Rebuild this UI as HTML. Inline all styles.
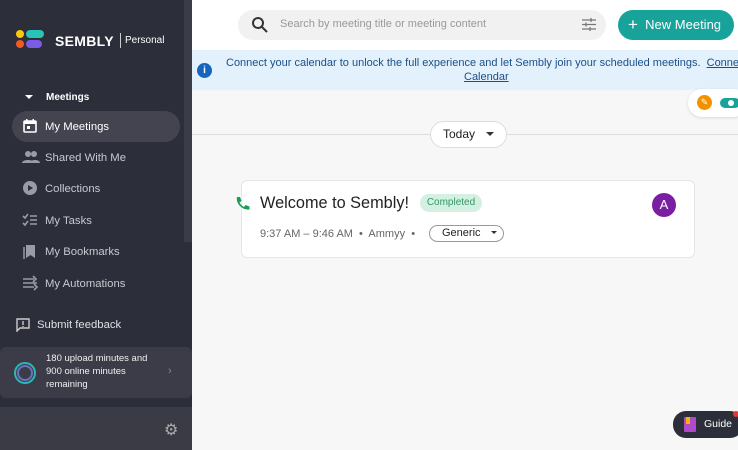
<!DOCTYPE html>
<html><head><style>
*{box-sizing:border-box;margin:0;padding:0}
body{width:738px;height:450px;overflow:hidden;font-family:"Liberation Sans",Arial,sans-serif;background:#f7f7f7;position:relative}
.sb{position:absolute;left:0;top:0;width:192px;height:450px;background:#2c2e39;color:#e8e8ec}
.scroll{position:absolute;left:184px;top:0;width:8px;height:242px;background:#3a3c47}
.item{position:absolute;left:12px;width:168px;height:31px;border-radius:16px;font-size:11.3px;display:flex;align-items:center;padding-left:33px;color:#c8c9d0}
.item svg{position:absolute;left:10px;top:7px}
.abs{position:absolute}
</style></head><body>
<div class="sb">
 <div class="scroll"></div>
 <svg class="abs" style="left:15px;top:30px" width="34" height="20">
  <circle cx="5" cy="4" r="4" fill="#f9c80e"/><circle cx="5" cy="14" r="4" fill="#f15a24"/>
  <rect x="11" y="0" width="18" height="8" rx="4" fill="#29c4b7"/><rect x="11" y="10" width="16" height="8" rx="4" fill="#7b5ce6"/>
 </svg>
 <div class="abs" style="left:55px;top:33px;font-size:14px;font-weight:bold;color:#fff;letter-spacing:.3px">SEMBLY</div>
 <div class="abs" style="left:120px;top:33px;width:1px;height:15px;background:#ccc"></div>
 <div class="abs" style="left:125px;top:35px;font-size:10px;color:#fff">Personal</div>
 <div class="abs" style="left:25px;top:95px;width:0;height:0;border-left:4px solid transparent;border-right:4px solid transparent;border-top:4px solid #fff"></div>
 <div class="abs" style="left:46px;top:92px;font-size:10px;font-weight:bold;color:#fff">Meetings</div>
 <div class="item" style="top:111px;background:#43444f;color:#fff"><svg width="16" height="16" viewBox="0 0 16 16"><rect x="2" y="3" width="12" height="11" rx="1" fill="none" stroke="#fff" stroke-width="1.6"/><rect x="2" y="3" width="12" height="3" fill="#fff"/><rect x="4" y="1" width="1.5" height="3" fill="#fff"/><rect x="10.5" y="1" width="1.5" height="3" fill="#fff"/><rect x="5" y="8" width="3" height="3" fill="#fff"/></svg>My Meetings</div>
 <div class="item" style="top:142px"><svg width="18" height="16" viewBox="0 0 18 16"><circle cx="6" cy="5" r="3" fill="#9a9ba5"/><circle cx="12" cy="5" r="3" fill="#9a9ba5"/><path d="M0 14c0-4 12-4 12 0zM8 14c0-4 10-4 10 0z" fill="#9a9ba5"/></svg>Shared With Me</div>
 <div class="item" style="top:173px"><svg width="16" height="16"><circle cx="8" cy="8" r="7" fill="#9a9ba5"/><path d="M6 5l5 3-5 3z" fill="#2c2e39"/></svg>Collections</div>
 <div class="item" style="top:205px"><svg width="16" height="16" fill="none" stroke="#9a9ba5" stroke-width="1.6"><path d="M1 4l2 2 3-4M1 11l2 2 3-4M8 4h7M8 8h7M8 12h7"/></svg>My Tasks</div>
 <div class="item" style="top:236px"><svg width="16" height="16"><path d="M4 2h9v13l-4.5-3L4 15z" fill="#9a9ba5"/><path d="M2 4v12" stroke="#9a9ba5" stroke-width="1.5"/></svg>My Bookmarks</div>
 <div class="item" style="top:268px"><svg width="16" height="16" fill="none" stroke="#9a9ba5" stroke-width="1.6"><path d="M1 4h11M1 8h14M1 12h11M11 1l3 3-3 3M12 9l3 3-3 3"/></svg>My Automations</div>
 <svg class="abs" style="left:16px;top:318px" width="14" height="14" fill="none" stroke="#ccc" stroke-width="1.4"><path d="M1 1h12v9H4l-3 3z"/><path d="M7 3v4M7 8v1"/></svg>
 <div class="abs" style="left:37px;top:319px;font-size:11.3px;color:#e0e0e4">Submit feedback</div>
 <div class="abs" style="left:0;top:347px;width:192px;height:51px;background:#3b3c47;border-radius:6px"></div>
 <svg class="abs" style="left:13px;top:361px" width="24" height="24"><circle cx="12" cy="12" r="10" fill="none" stroke="#2ab8b0" stroke-width="2"/><circle cx="12" cy="12" r="7" fill="none" stroke="#6c6fc9" stroke-width="2"/></svg>
 <div class="abs" style="left:46px;top:352px;font-size:9.5px;line-height:13px;color:#f0f0f2">180 upload minutes and<br>900 online minutes<br>remaining</div>
 <div class="abs" style="left:168px;top:365px;font-size:11px;color:#888">›</div>
 <div class="abs" style="left:0;top:407px;width:192px;height:43px;background:#3a3b45"></div>
 <div class="abs" style="left:164px;top:420px;font-size:16px;color:#aaa">⚙</div>
</div>
<div class="abs" style="left:192px;top:0;width:546px;height:50px;background:#fff"></div>
<div class="abs" style="left:238px;top:10px;width:368px;height:30px;background:#f1f1f1;border-radius:15px"></div>
<svg class="abs" style="left:252px;top:17px" width="16" height="16" fill="none" stroke="#333" stroke-width="2"><circle cx="6" cy="6" r="5"/><path d="M10 10l5 5"/></svg>
<div class="abs" style="left:280px;top:18px;font-size:11px;color:#999">Search by meeting title or meeting content</div>
<svg class="abs" style="left:582px;top:18px" width="14" height="13" stroke="#777" stroke-width="1.3"><path d="M0 2h14M0 6.5h14M0 11h14"/><path d="M9 0v4M4 4.5v4M8 9v4"/></svg>
<div class="abs" style="left:618px;top:10px;width:116px;height:30px;background:#17a39a;border-radius:15px;color:#fff;font-size:13px;line-height:30px;padding-left:10px"><span style="font-size:17px;vertical-align:-1px">+</span>&nbsp; New Meeting</div>
<div class="abs" style="left:192px;top:50px;width:546px;height:40px;background:#e2f1fb"></div>
<div class="abs" style="left:197px;top:63px;width:15px;height:15px;border-radius:50%;background:#1565c0;color:#fff;font-size:10px;font-weight:bold;text-align:center;line-height:15px">i</div>
<div class="abs" style="left:226px;top:55px;width:540px;font-size:11px;line-height:16px;color:#1c4f8a;white-space:nowrap">Connect your calendar to unlock the full experience and let Sembly join your scheduled meetings. &nbsp;<u>Connect</u></div>
<div class="abs" style="left:464px;top:71px;font-size:11px;color:#1c4f8a"><u>Calendar</u></div>
<div class="abs" style="left:688px;top:89px;width:60px;height:28px;background:#fff;border-radius:14px;box-shadow:0 1px 3px rgba(0,0,0,.12)"></div>
<div class="abs" style="left:697px;top:95px;width:15px;height:15px;border-radius:50%;background:#f39200;color:#fff;font-size:9px;text-align:center;line-height:15px">✎</div>
<div class="abs" style="left:720px;top:98px;width:20px;height:10px;border-radius:5px;background:#17a39a"></div>
<div class="abs" style="left:728px;top:100px;width:6px;height:6px;border-radius:50%;background:#fff"></div>
<div class="abs" style="left:192px;top:134px;width:546px;height:1px;background:#ddd"></div>
<div class="abs" style="left:430px;top:121px;width:77px;height:27px;background:#fff;border:1px solid #ddd;border-radius:14px;font-size:12px;line-height:25px;padding-left:12px;color:#222">Today <span style="display:inline-block;margin-left:8px;border-left:4px solid transparent;border-right:4px solid transparent;border-top:4px solid #333;vertical-align:2px"></span></div>
<div class="abs" style="left:241px;top:180px;width:454px;height:78px;background:#fff;border:1px solid #e6e6e6;border-radius:6px"></div>
<svg class="abs" style="left:234px;top:196px" width="16" height="16"><path d="M3 1l3 0 1.5 4-2 1.5c1 2 2.5 3.5 4.5 4.5L11.5 9l4 1.5v3c-7 1-14-6-12.5-12.5z" fill="#17a055"/></svg>
<div class="abs" style="left:260px;top:194px;font-size:16.3px;color:#222">Welcome to Sembly!</div>
<div class="abs" style="left:420px;top:194px;width:62px;height:18px;background:#d4f0e2;border-radius:9px;font-size:10px;line-height:18px;text-align:center;color:#2e9964">Completed</div>
<div class="abs" style="left:652px;top:193px;width:24px;height:24px;border-radius:50%;background:#7b1fa2;color:#fff;font-size:13px;text-align:center;line-height:24px">A</div>
<div class="abs" style="left:260px;top:228px;font-size:11px;color:#666">9:37 AM – 9:46 AM &nbsp;•&nbsp; Ammyy &nbsp;•</div>
<div class="abs" style="left:429px;top:225px;width:75px;height:17px;border:1px solid #999;border-radius:9px;font-size:11px;line-height:15px;padding-left:12px;color:#222">Generic <span style="display:inline-block;margin-left:7px;border-left:3.5px solid transparent;border-right:3.5px solid transparent;border-top:3.5px solid #333;vertical-align:2px"></span></div>
<div class="abs" style="left:673px;top:411px;width:70px;height:27px;background:#2c2e39;border-radius:13px;color:#fff;font-size:10.5px;line-height:27px;padding-left:31px">Guide</div>
<div class="abs" style="left:684px;top:417px;width:12px;height:15px;background:#b04ac8;border-radius:1px"></div>
<div class="abs" style="left:686px;top:417px;width:4px;height:7px;background:#f5b400"></div>
<div class="abs" style="left:733px;top:411px;width:6px;height:6px;border-radius:50%;background:#e53935"></div>
</body></html>
